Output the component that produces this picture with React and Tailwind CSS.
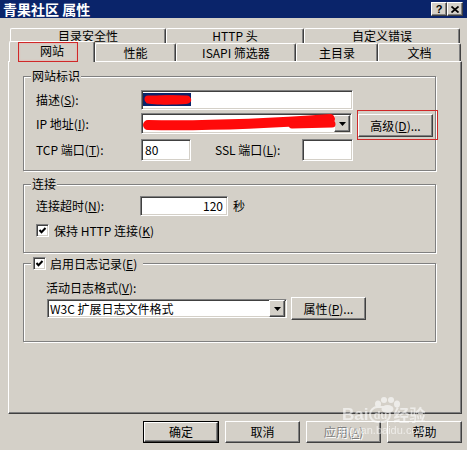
const raised =
  "bg-[#d4d0c8] border border-t-white border-l-white border-r-[#404040] border-b-[#404040] shadow-[inset_-1px_-1px_0_#808080]"
const sunken =
  "bg-white border border-t-[#808080] border-l-[#808080] border-r-white border-b-white shadow-[inset_1px_1px_0_#404040,inset_-1px_-1px_0_#d4d0c8]"

const Key = ({ k }) => (
  <span>
    (<span className="underline underline-offset-[1px]">{k}</span>)
  </span>
)

const DropBtn = () => (
  <div className={`${raised} w-[16px] h-[17px] flex items-center justify-center`}>
    <svg width="7" height="4" viewBox="0 0 7 4">
      <polygon points="0,0 7,0 3.5,4" fill="#000" />
    </svg>
  </div>
)

const Check = () => (
  <div className={`${sunken} w-[13px] h-[13px] flex items-center justify-center shrink-0`}>
    <svg width="9" height="9" viewBox="0 0 9 9">
      <polyline points="1.5,4 3.5,6.2 7.5,2" fill="none" stroke="#000" strokeWidth="2" />
    </svg>
  </div>
)

const Group = ({ legend, className, children }) => (
  <div
    className={`relative w-[413px] border border-[#808080] shadow-[inset_1px_1px_0_#fff,1px_1px_0_#fff] ${className}`}
  >
    <div className="absolute left-[7px] top-[-7px] bg-[#d4d0c8] px-[1px] leading-[12px]">{legend}</div>
    {children}
  </div>
)

const BackTab = ({ w, children }) => (
  <div
    className={`${w} h-full flex items-center justify-center border-t border-l border-white border-r border-r-[#404040] shadow-[inset_-1px_0_0_#808080] rounded-t-[2px]`}
  >
    {children}
  </div>
)

const FrontTab = ({ w, children }) => (
  <div
    className={`${w} h-[18px] flex items-center justify-center border-t border-l border-white border-r border-r-[#404040] shadow-[inset_-1px_0_0_#808080] rounded-t-[2px]`}
  >
    {children}
  </div>
)

const Watermark = () => (
  <div className="absolute left-[338px] top-[397px] w-[110px] h-[42px] pointer-events-none text-white opacity-60">
    <svg className="absolute left-[34px] top-[0px]" width="30" height="16" viewBox="0 0 30 16">
      <ellipse cx="6" cy="7" rx="3" ry="3.5" fill="#fff" />
      <ellipse cx="12" cy="3" rx="3" ry="3" fill="#fff" />
      <ellipse cx="19" cy="3" rx="3" ry="3" fill="#fff" />
      <ellipse cx="25" cy="7" rx="3" ry="3.5" fill="#fff" />
      <ellipse cx="15.5" cy="12" rx="6" ry="4" fill="#fff" />
    </svg>
    <div className="absolute left-[4px] top-[9px] flex items-center font-['Liberation_Sans',sans-serif] font-bold text-[17px] leading-[17px]">
      <span>Bai</span>
      <span className="ml-[1px] w-[22px] h-[17px] rounded-full border-2 border-white text-[11px] leading-[12px] flex items-center justify-center">
        du
      </span>
      <span className="ml-[2px] font-['Noto_Sans_CJK_SC',sans-serif] text-[16px]">经验</span>
    </div>
    <div className="absolute left-[0px] top-[28px] font-['Liberation_Sans',sans-serif] text-[11px] leading-[11px]">
      jingyan.baidu.com
    </div>
  </div>
)

export default function App() {
  return (
    <div className="relative w-[467px] h-[450px] overflow-hidden bg-[#d4d0c8] text-black text-[12px] leading-[12px] font-['Noto_Sans_CJK_SC',sans-serif]">
      {/* title bar */}
      <div className="h-[18px] bg-[#0a246a] flex items-center justify-between pl-[3px] pr-[4px]">
        <span className="text-white font-bold text-[14px] leading-[14px]">青果社区 属性</span>
        <div className="flex">
          <div className={`${raised} w-[16px] h-[14px] flex items-center justify-center font-['Liberation_Sans',sans-serif] font-bold text-[11px]`}>
            ?
          </div>
          <div className={`${raised} w-[16px] h-[14px] flex items-center justify-center`}>
            <svg width="8" height="7" viewBox="0 0 8 7">
              <path d="M0.5 0.5 L7.5 6.5 M7.5 0.5 L0.5 6.5" stroke="#000" strokeWidth="1.7" />
            </svg>
          </div>
        </div>
      </div>

      {/* tabs */}
      <div className="mt-[10px] ml-[10px] flex h-[15px]">
        <BackTab w="w-[156px]">目录安全性</BackTab>
        <BackTab w="w-[138px]">HTTP 头</BackTab>
        <BackTab w="w-[156px]">自定义错误</BackTab>
      </div>
      <div className="relative z-10 -mt-[2px] ml-[9px] flex items-end h-[20px]">
        <div className="relative w-[86px] h-[21px] -mb-[1px] bg-[#d4d0c8] flex items-center justify-center pb-[3px] border-t border-l border-white border-r border-r-[#404040] shadow-[inset_-1px_0_0_#808080] rounded-t-[2px]">
          网站
          <div className="absolute left-[8px] top-0 w-[60px] h-[20px] border border-[#d02828] shadow-[inset_0_0_2px_#f0a0a0]" />
        </div>
        <FrontTab w="w-[81px]">性能</FrontTab>
        <FrontTab w="w-[120px]">ISAPI 筛选器</FrontTab>
        <FrontTab w="w-[82px]">主目录</FrontTab>
        <FrontTab w="w-[83px]">文档</FrontTab>
      </div>

      {/* page */}
      <div className="ml-[8px] w-[454px] h-[353px] border border-t-white border-l-white border-r-[#404040] border-b-[#404040] shadow-[inset_-1px_-1px_0_#808080] pt-[14px] pl-[14px]">
        <Group legend="网站标识" className="h-[95px] pl-[12px]">
          <div className="mt-[13px] h-[20px] flex items-center">
            <span className="w-[105px]">描述<Key k="S" />:</span>
            <div className={`${sunken} relative w-[212px] h-[20px]`}>
              <svg className="absolute left-0 top-0" width="60" height="18" viewBox="0 0 60 18">
                <rect x="1" y="2" width="48" height="13" fill="#0a246a" />
                <path d="M5 9 C 10 3, 30 4, 44 5 C 51 6, 51 12, 44 13 C 30 14, 10 14, 4 12 Z" fill="#ff0a0a" />
                <path d="M6 8 L45 8" stroke="#ff0a0a" strokeWidth="7" strokeLinecap="round" />
              </svg>
            </div>
          </div>
          <div className="mt-[3px] h-[24px] flex items-start">
            <span className="w-[105px] h-[21px] flex items-center">IP 地址<Key k="I" />:</span>
            <div className={`${sunken} relative w-[211px] h-[21px] flex items-center justify-end pr-[1px]`}>
              <svg className="absolute left-0 top-0" width="200" height="19" viewBox="0 0 200 19">
                <path d="M6 11 C 60 12, 120 10, 188 5" fill="none" stroke="#ff0a0a" strokeWidth="10" strokeLinecap="round" />
                <path d="M150 11 L190 10" stroke="#ff0a0a" strokeWidth="7" strokeLinecap="round" />
              </svg>
              <DropBtn />
            </div>
            <div className="relative ml-[6px] mt-[1px]">
              <button className={`${raised} w-[75px] h-[23px] flex items-center justify-center`}>
                高级<Key k="D" />...
              </button>
              <div className="absolute left-[-1px] top-[-4px] w-[81px] h-[30px] border border-[#d02828]" />
            </div>
          </div>
          <div className="mt-[2px] h-[22px] flex items-center">
            <span className="w-[105px]">TCP 端口<Key k="T" />:</span>
            <div className={`${sunken} w-[50px] h-[22px] pl-[3px] flex items-center`}>80</div>
            <span className="ml-[24px] w-[87px]">SSL 端口<Key k="L" />:</span>
            <div className={`${sunken} w-[51px] h-[22px]`} />
          </div>
        </Group>

        <Group legend="连接" className="mt-[13px] h-[69px] pl-[12px]">
          <div className="mt-[11px] h-[20px] flex items-center">
            <span className="w-[104px]">连接超时<Key k="N" />:</span>
            <div className={`${sunken} w-[88px] h-[20px] pr-[4px] flex items-center justify-end`}>120</div>
            <span className="ml-[5px]">秒</span>
          </div>
          <div className="mt-[8px] h-[13px] flex items-center">
            <Check />
            <span className="ml-[5px]">保持 HTTP 连接<Key k="K" /></span>
          </div>
        </Group>

        <Group
          legend={
            <div className="flex items-center pl-[1px] pr-[5px]">
              <Check />
              <span className="ml-[4px]">启用日志记录<Key k="E" /></span>
            </div>
          }
          className="mt-[10px] h-[79px] pl-[22px]"
        >
          <div className="mt-[18px]">活动日志格式<Key k="V" />:</div>
          <div className="mt-[3px] flex items-start">
            <div className={`${sunken} ml-[1px] mt-[2px] w-[240px] h-[19px] flex items-center justify-between pl-[2px] pr-[1px]`}>
              <span>W3C 扩展日志文件格式</span>
              <DropBtn />
            </div>
            <button className={`${raised} ml-[4px] w-[75px] h-[23px] flex items-center justify-center`}>
              属性<Key k="P" />...
            </button>
          </div>
        </Group>
      </div>

      {/* dialog buttons */}
      <div className="mt-[7px] flex justify-end gap-[6px] pr-[5px]">
        <div className="w-[76px] h-[22px] border border-black">
          <button className={`${raised} w-full h-full flex items-center justify-center`}>确定</button>
        </div>
        <button className={`${raised} w-[75px] h-[22px] flex items-center justify-center`}>取消</button>
        <button className={`${raised} w-[75px] h-[22px] flex items-center justify-center text-[#808080] [text-shadow:1px_1px_0_#fff]`}>
          应用<Key k="A" />
        </button>
        <button className={`${raised} w-[75px] h-[22px] flex items-center justify-center`}>帮助</button>
      </div>

      <Watermark />
    </div>
  )
}
